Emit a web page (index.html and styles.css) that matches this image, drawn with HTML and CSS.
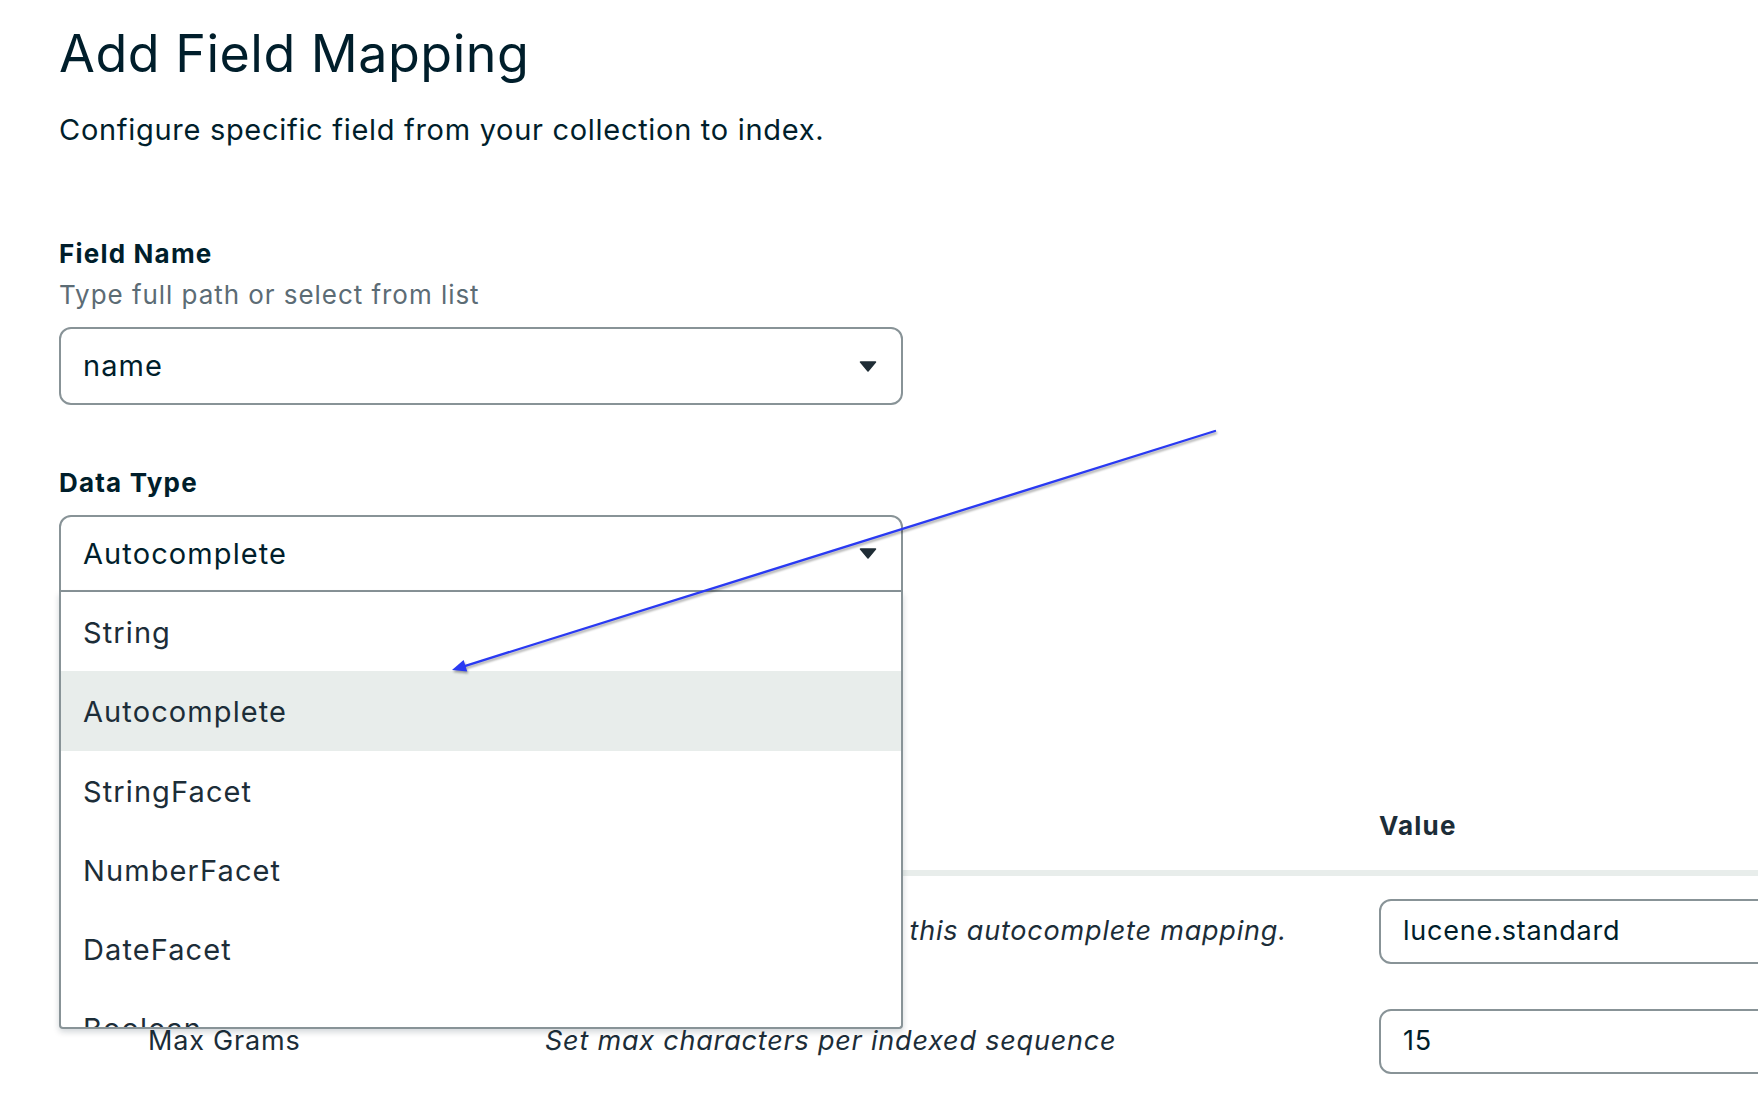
FILE: index.html
```html
<!DOCTYPE html>
<html lang="en">
<head>
<meta charset="utf-8">
<title>Add Field Mapping</title>
<link rel="stylesheet" href="styles.css">
</head>
<body>
<main class="page">
  <h1 class="title">Add Field Mapping</h1>
  <p class="subtitle">Configure specific field from your collection to index.</p>

  <section class="field">
    <div class="label">Field Name</div>
    <div class="helper">Type full path or select from list</div>
    <div class="select">
      <span class="select-text">name</span>
      <svg class="caret" width="18" height="11" viewBox="0 0 18 11"><path d="M1.5 1 H16.5 L9 10 Z" fill="#1f2d36" stroke="#1f2d36" stroke-width="1.5" stroke-linejoin="round"/></svg>
    </div>
  </section>

  <section class="field field-type">
    <div class="label">Data Type</div>
    <div class="select-wrap">
      <div class="select open">
        <span class="select-text">Autocomplete</span>
        <svg class="caret" width="18" height="11" viewBox="0 0 18 11"><path d="M1.5 1 H16.5 L9 10 Z" fill="#1f2d36" stroke="#1f2d36" stroke-width="1.5" stroke-linejoin="round"/></svg>
      </div>
      <ul class="menu">
        <li class="menu-item">String</li>
        <li class="menu-item active">Autocomplete</li>
        <li class="menu-item">StringFacet</li>
        <li class="menu-item">NumberFacet</li>
        <li class="menu-item">DateFacet</li>
        <li class="menu-item">Boolean</li>
        <li class="menu-item">ObjectId</li>
      </ul>
    </div>
  </section>

  <div class="options">
    <div class="cell head first">Option</div>
    <div class="cell head">Description</div>
    <div class="cell head">Value</div>

    <div class="cell first">Analyzer</div>
    <div class="cell desc"><span>Select analyzer to use for &nbsp;this autocomplete mapping.</span></div>
    <div class="cell"><div class="input">lucene.standard</div></div>

    <div class="cell first">Max Grams</div>
    <div class="cell desc"><span>Set max characters per indexed sequence</span></div>
    <div class="cell"><div class="input">15</div></div>
  </div>
</main>

<svg class="annotation" width="1758" height="1112" viewBox="0 0 1758 1112">
  <g class="arrow">
    <line x1="1215" y1="431" x2="465.4" y2="665.8" stroke="#2a3af2" stroke-width="2.3" stroke-linecap="round"/>
    <polygon points="452,670 467.2,671.5 463.6,660.1" fill="#2a3af2"/>
  </g>
</svg>
</body>
</html>
```

FILE: styles.css
```css
html, body {
  margin: 0;
  padding: 0;
  background: #ffffff;
}

body {
  width: 1758px;
  height: 1112px;
  overflow: hidden;
  position: relative;
  font-family: Inter, "Liberation Sans", sans-serif;
  color: #001e2b;
}

.page {
  padding: 24px 0 0 59px;
}

.title {
  margin: 0;
  font-size: 52px;
  line-height: 60px;
  font-weight: 400;
  letter-spacing: 0.5px;
  color: #001e2b;
}

.subtitle {
  margin: 28px 0 0;
  font-size: 29px;
  line-height: 36px;
  letter-spacing: 0.7px;
  color: #001e2b;
}

.field {
  margin-top: 90px;
  width: 844px;
}

.field-type {
  margin-top: 62px;
}

.label {
  font-size: 26px;
  line-height: 32px;
  font-weight: 700;
  letter-spacing: 1.2px;
  color: #001e2b;
}

.field-type .label {
  margin-bottom: 16px;
}

.helper {
  margin: 9px 0 16px;
  font-size: 26px;
  line-height: 32px;
  letter-spacing: 0.95px;
  color: #5c6c75;
}

.select {
  box-sizing: border-box;
  height: 78px;
  border: 2px solid #889397;
  border-radius: 12px;
  display: flex;
  align-items: center;
  justify-content: space-between;
  padding: 0 24px 0 22px;
  font-size: 29px;
  line-height: 34px;
  letter-spacing: 1.1px;
  color: #001e2b;
}

.select.open {
  height: 77px;
  border-radius: 12px 12px 0 0;
}

.caret {
  display: block;
}

.select-wrap {
  position: relative;
}

.menu {
  position: absolute;
  top: 100%;
  left: 0;
  right: 0;
  z-index: 5;
  margin: 0;
  padding: 0;
  list-style: none;
  box-sizing: border-box;
  height: 437px;
  overflow: hidden;
  background: #ffffff;
  border: 2px solid #889397;
  border-top: none;
  border-radius: 0 0 4px 4px;
  box-shadow: 0 3px 6px rgba(0, 30, 43, 0.18);
}

.menu-item {
  height: 79px;
  display: flex;
  align-items: center;
  padding: 3px 0 0 22px;
  box-sizing: border-box;
  font-size: 29px;
  line-height: 34px;
  letter-spacing: 1.1px;
  color: #1c2d38;
}

.menu-item.active {
  height: 80px;
  padding-top: 1px;
  background: #e8edeb;
}

.options {
  display: grid;
  grid-template-columns: 486px 834px 460px;
  margin-top: 198px;
  width: 1780px;
  color: #1c2d38;
  font-size: 27px;
  line-height: 32px;
  letter-spacing: 0.8px;
}

.cell {
  height: 110px;
  display: flex;
  align-items: center;
  white-space: nowrap;
}

.cell.first {
  padding-left: 89px;
}

.cell.head {
  height: 86px;
  box-sizing: border-box;
  padding-top: 20px;
  padding-bottom: 28px;
  align-items: flex-start;
  border-bottom: 6px solid #e8edeb;
  font-size: 26px;
  font-weight: 700;
  letter-spacing: 1.2px;
}

.cell.desc {
  font-style: italic;
}

.input {
  box-sizing: border-box;
  width: 440px;
  height: 65px;
  border: 2px solid #889397;
  border-radius: 12px;
  display: flex;
  align-items: center;
  padding-left: 22px;
  color: #001e2b;
}

.annotation {
  position: absolute;
  top: 0;
  left: 0;
  z-index: 10;
  pointer-events: none;
}

.arrow {
  filter: drop-shadow(1px 2px 1.2px rgba(0, 0, 0, 0.35));
}
```
